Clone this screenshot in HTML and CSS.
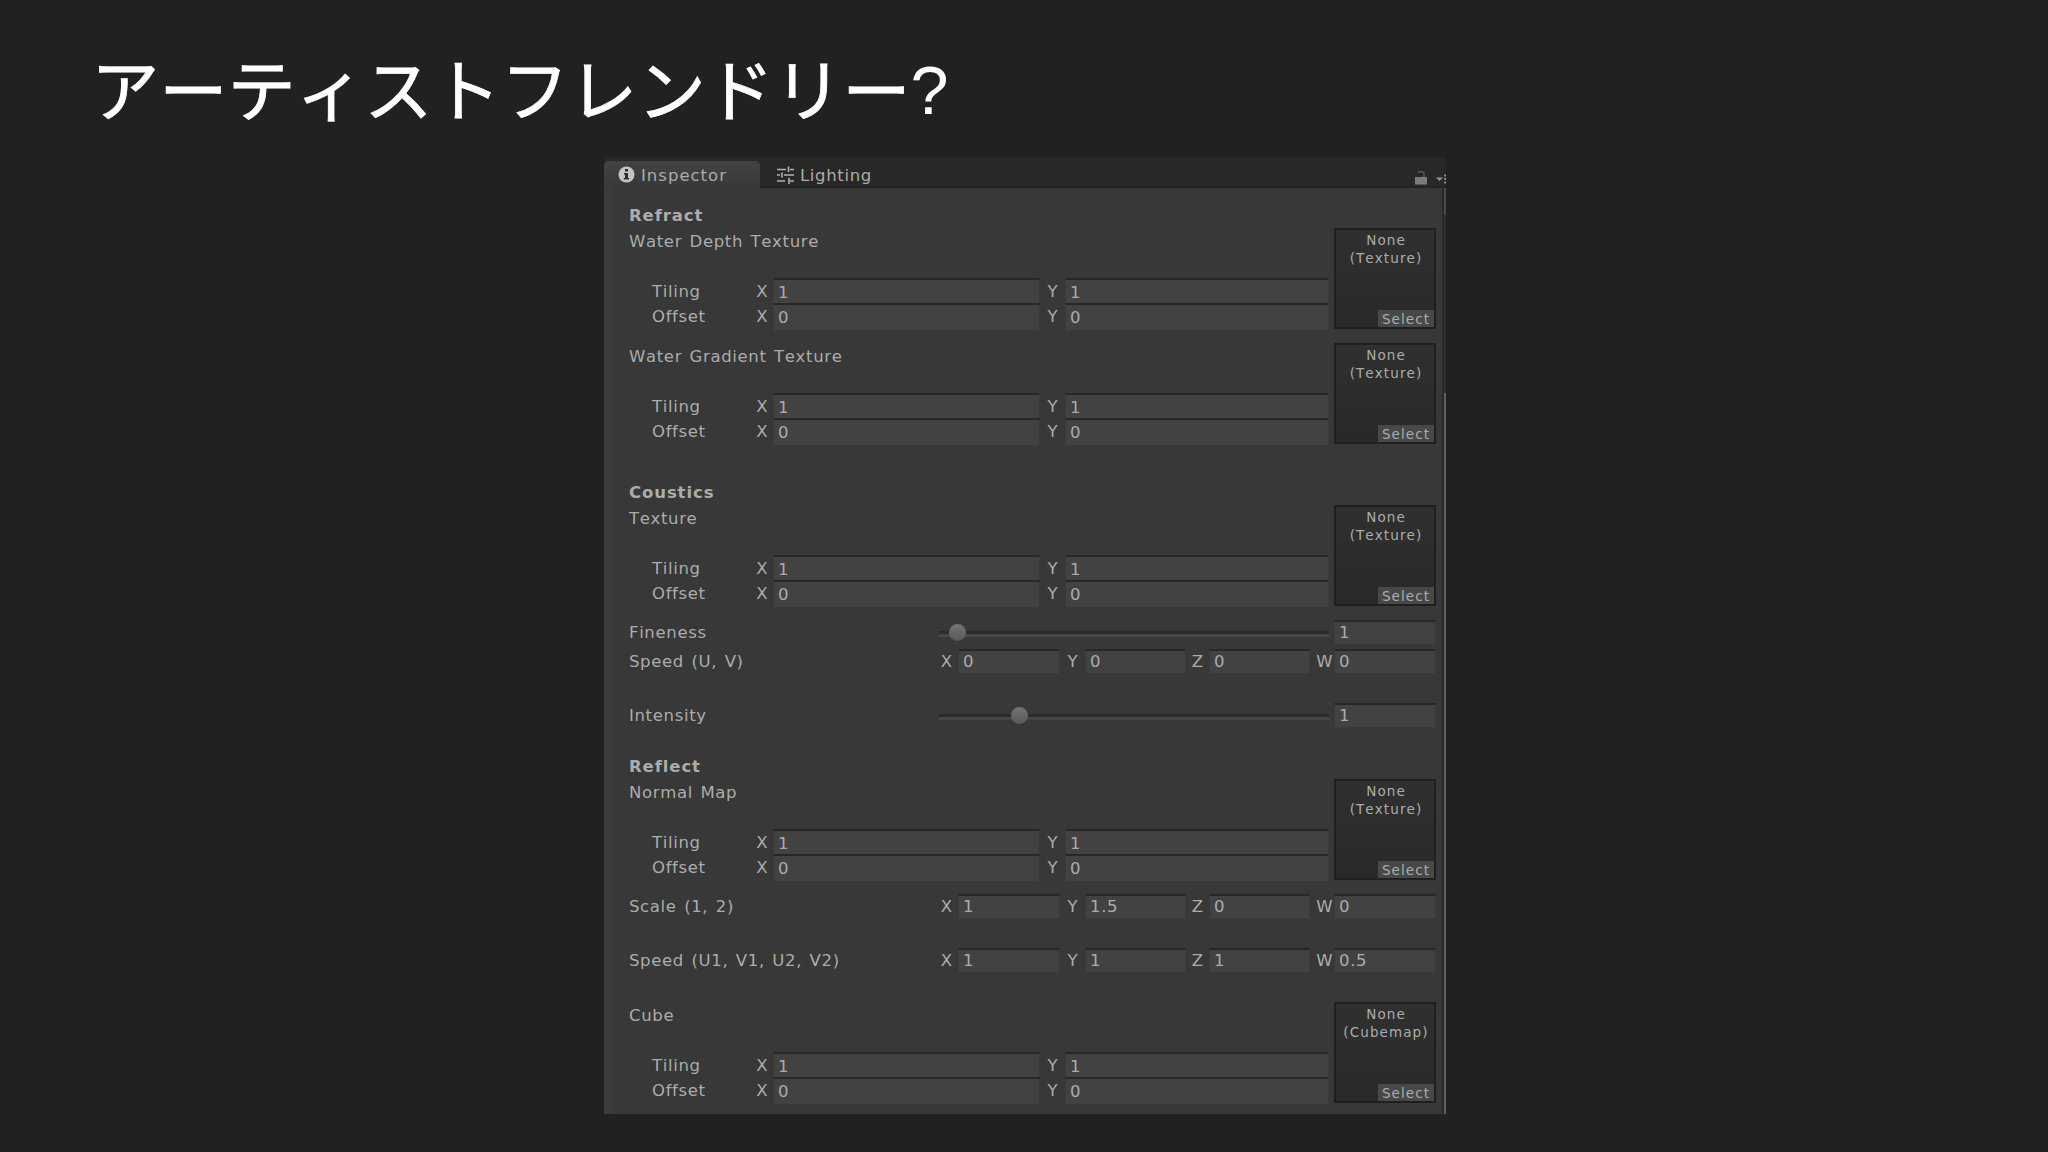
FILE: index.html
```html
<!DOCTYPE html>
<html lang="ja">
<head>
    <meta charset="UTF-8">
    <title>アーティストフレンドリー?</title>
    <link rel="stylesheet" href="styles.css">
</head>
<body>

<h1>アーティストフレンドリー<span class="latin">?</span></h1>

<div class="inspector">
    <div class="tabs">
        <div class="tab active">
            <svg width="17" height="17" viewBox="0 0 17 17">
                <circle cx="8.5" cy="8.5" r="8" fill="#c4c4c4"/>
                <path d="M7 3h3v2.5H7zM6 7h4v5h1.2v1.6H5.8V12H7V8.5H6z" fill="#2c2c2c"/>
            </svg>
            <span>Inspector</span>
        </div>
        <div class="tab">
            <svg width="18" height="18" viewBox="0 0 18 18" fill="none" stroke="#b0b0b0" stroke-width="1.6">
                <path d="M0 3.5h9M13 3.5h4M0 9h3M7 9h10M0 15h8M13 15h4"/>
                <path d="M11.5 0.5v5.5M5 6.5v5M12 12v6"/>
            </svg>
            <span>Lighting</span>
        </div>
        <div class="tools">
            <svg class="lock" width="14" height="16" viewBox="0 0 14 16">
                <rect x="1" y="8" width="12" height="7.5" fill="#7c7c7c"/>
                <path d="M4 4C5 2 10 2 10 5v3" fill="none" stroke="#505050" stroke-width="1.8"/>
            </svg>
            <svg class="menu" width="10" height="10" viewBox="0 0 10 10" fill="#969696">
                <path d="M0 3.5h7L3.5 7z"/>
                <path d="M8.3 0.5H10v2H8.3zM8.3 4H10v2H8.3zM8.3 7.5H10v2H8.3z"/>
            </svg>
        </div>
    </div>

    <div class="content">
        <div class="panel">
            <h2>Refract</h2>
            <div class="texture">
                <div class="props">
                    <div class="label">Water Depth Texture</div>
                    <div class="uv"><span>Tiling</span><b>X</b><div class="field">1</div><b>Y</b><div class="field">1</div></div>
                    <div class="uv"><span>Offset</span><b>X</b><div class="field">0</div><b>Y</b><div class="field">0</div></div>
                </div>
                <div class="thumb"><p>None<br>(Texture)</p><span class="select">Select</span></div>
            </div>
            <div class="texture gap-s">
                <div class="props">
                    <div class="label">Water Gradient Texture</div>
                    <div class="uv"><span>Tiling</span><b>X</b><div class="field">1</div><b>Y</b><div class="field">1</div></div>
                    <div class="uv"><span>Offset</span><b>X</b><div class="field">0</div><b>Y</b><div class="field">0</div></div>
                </div>
                <div class="thumb"><p>None<br>(Texture)</p><span class="select">Select</span></div>
            </div>

            <h2 class="gap-h">Coustics</h2>
            <div class="texture">
                <div class="props">
                    <div class="label">Texture</div>
                    <div class="uv"><span>Tiling</span><b>X</b><div class="field">1</div><b>Y</b><div class="field">1</div></div>
                    <div class="uv"><span>Offset</span><b>X</b><div class="field">0</div><b>Y</b><div class="field">0</div></div>
                </div>
                <div class="thumb"><p>None<br>(Texture)</p><span class="select">Select</span></div>
            </div>
            <div class="range gap-s">
                <span>Fineness</span>
                <div class="slider"><i class="knob" style="margin-left: 10px"></i></div>
                <div class="field">1</div>
            </div>
            <div class="vector gap-xs">
                <span>Speed (U, V)</span>
                <b>X</b><div class="field">0</div><b>Y</b><div class="field">0</div><b>Z</b><div class="field">0</div><b>W</b><div class="field">0</div>
            </div>
            <div class="range gap-l">
                <span>Intensity</span>
                <div class="slider"><i class="knob" style="margin-left: 72px"></i></div>
                <div class="field">1</div>
            </div>

            <h2 class="gap-m">Reflect</h2>
            <div class="texture">
                <div class="props">
                    <div class="label">Normal Map</div>
                    <div class="uv"><span>Tiling</span><b>X</b><div class="field">1</div><b>Y</b><div class="field">1</div></div>
                    <div class="uv"><span>Offset</span><b>X</b><div class="field">0</div><b>Y</b><div class="field">0</div></div>
                </div>
                <div class="thumb"><p>None<br>(Texture)</p><span class="select">Select</span></div>
            </div>
            <div class="vector gap-s">
                <span>Scale (1, 2)</span>
                <b>X</b><div class="field">1</div><b>Y</b><div class="field">1.5</div><b>Z</b><div class="field">0</div><b>W</b><div class="field">0</div>
            </div>
            <div class="vector gap-l">
                <span>Speed (U1, V1, U2, V2)</span>
                <b>X</b><div class="field">1</div><b>Y</b><div class="field">1</div><b>Z</b><div class="field">1</div><b>W</b><div class="field">0.5</div>
            </div>
            <div class="texture gap-l">
                <div class="props">
                    <div class="label">Cube</div>
                    <div class="uv"><span>Tiling</span><b>X</b><div class="field">1</div><b>Y</b><div class="field">1</div></div>
                    <div class="uv"><span>Offset</span><b>X</b><div class="field">0</div><b>Y</b><div class="field">0</div></div>
                </div>
                <div class="thumb"><p>None<br>(Cubemap)</p><span class="select">Select</span></div>
            </div>
        </div>
        <div class="scrollbar"></div>
    </div>
</div>

</body>
</html>
```
FILE: styles.css
```css
* {
    box-sizing: border-box;
}
body {
    margin: 0;
    height: 1152px;
    overflow: hidden;
    background-color: #212121;
    color: #acacac;
    font-family: "DejaVu Sans", sans-serif;
    font-size: 16.5px;
    font-kerning: none;
    letter-spacing: 0.65px;
    word-spacing: 1.6px;
}
h1 {
    margin: 0;
    height: 157px;
    padding: 38px 0 0 91px;
    color: #fff;
    font-family: "Noto Sans CJK JP", sans-serif;
    font-size: 68.3px;
    font-weight: 400;
    line-height: 98px;
    letter-spacing: 0;
    white-space: nowrap;
    -webkit-text-stroke: 0.8px #fff;
}
.latin {
    font-family: "Liberation Sans", sans-serif;
    line-height: 1;
    vertical-align: 2px;
    -webkit-text-stroke: 0;
}
.inspector {
    width: 842px;
    height: 957px;
    margin-left: 604px;
    background-color: #383838;
}

/* tab bar */
.tabs {
    display: flex;
    align-items: flex-end;
    height: 31px;
    background-color: #282828;
    box-shadow: inset 0 -2px #242424;
}
.tab {
    display: flex;
    align-items: center;
    gap: 5px;
    height: 27px;
    padding-left: 17px;
}
.tab span {
    padding-top: 2px;
}
.tab.active {
    width: 156px;
    padding-left: 14px;
    gap: 6px;
    border-radius: 5px 5px 0 0;
    background: linear-gradient(#434343, #383838);
    letter-spacing: 1px;
}
.tools {
    display: flex;
    align-items: center;
    gap: 8px;
    height: 27px;
    margin-left: auto;
}
.lock {
    margin-top: 4px;
}
.menu {
    margin-top: 9px;
}

/* body */
.content {
    display: flex;
    height: 926px;
}
.panel {
    width: 838px;
    padding: 15px 6px 0 18px;
    border-left: 8px solid #3b3b3b;
}
.scrollbar {
    width: 4px;
    border-left: 2px solid #2a2a2a;
    background: linear-gradient(#4a4a4a 27px, #2d2d2d 27px, #2d2d2d 205px, #606060 205px);
}
h2 {
    margin: 0 0 0 -1px;
    height: 25px;
    font-size: 16.5px;
    line-height: 25px;
    letter-spacing: 0.9px;
}
.gap-xs { margin-top: 5px; }
.gap-s { margin-top: 14px; }
.gap-m { margin-top: 27px; }
.gap-l { margin-top: 30px; }
.gap-h { margin-top: 36px; }

.texture {
    display: flex;
    justify-content: space-between;
    height: 101px;
}
.props {
    width: 699px;
}
.label {
    height: 50px;
    margin-left: -1px;
    line-height: 27px;
}
.uv {
    display: grid;
    grid-template-columns: 99px 22px 267px 25px 264px;
    height: 25px;
    padding-left: 22px;
    line-height: 28px;
}
.vector {
    display: grid;
    grid-template-columns: 305px 23px 102px 25px 101px 23px 101px 24px 102px;
    height: 24px;
    line-height: 25px;
}
.vector > span, .range > span {
    margin-left: -1px;
}
.uv b, .vector b {
    font-weight: 400;
    text-align: center;
    letter-spacing: 0;
}
.vector b:nth-of-type(4) {
    padding-left: 5px;
}
.field {
    height: 100%;
    padding-left: 4px;
    border: 1px solid #3a3a3a;
    border-top: 2px solid #272727;
    background-color: #424242;
    line-height: 21px;
}
.uv .field {
    line-height: 25px;
}
.range {
    display: grid;
    grid-template-columns: 309px 390px 102px;
    height: 24px;
    line-height: 25px;
}
.range .field {
    width: 102px;
    margin-left: 5px;
}
.slider {
    display: flex;
    align-items: center;
    height: 25px;
    background: linear-gradient(#2b2b2b 50%, #464646 50%) 0 11px / 100% 6px no-repeat;
}
.knob {
    width: 17px;
    height: 17px;
    border-radius: 50%;
    background: linear-gradient(#747474, #595959);
}
.thumb {
    display: flex;
    flex-direction: column;
    align-items: flex-end;
    justify-content: space-between;
    width: 102px;
    border: 2px solid #1f1f1f;
    background: linear-gradient(#303030, #292929);
    font-size: 13.5px;
    letter-spacing: 1.1px;
}
.thumb p {
    width: 100%;
    margin: 2px 0 0;
    padding-left: 2px;
    text-align: center;
    line-height: 17.5px;
}
.select {
    width: 56px;
    height: 17px;
    background-color: #484848;
    text-align: center;
    line-height: 18px;
}
```
